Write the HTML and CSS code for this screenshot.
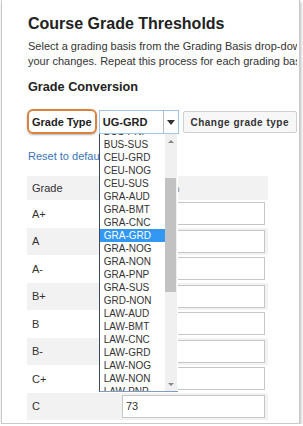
FILE: index.html
```html
<!DOCTYPE html>
<html lang="en">
<head>
<meta charset="utf-8">
<title>Course Grade Thresholds</title>
<link rel="stylesheet" href="styles.css">
</head>
<body>
<div class="card">
  <h1 class="title">Course Grade Thresholds</h1>
  <p class="intro">Select a grading basis from the Grading Basis drop-down list, make<br>your changes. Repeat this process for each grading basis.</p>
  <h2 class="subtitle">Grade Conversion</h2>
  <div class="controls">
    <span class="type-label">Grade Type</span>
    <div class="select">
      <span class="select-value">UG-GRD</span>
      <span class="select-btn"><span class="caret"></span></span>
      <div class="listbox">
        <div class="options">
          <div class="opt">BUS-PNP</div>
          <div class="opt">BUS-SUS</div>
          <div class="opt">CEU-GRD</div>
          <div class="opt">CEU-NOG</div>
          <div class="opt">CEU-SUS</div>
          <div class="opt">GRA-AUD</div>
          <div class="opt">GRA-BMT</div>
          <div class="opt">GRA-CNC</div>
          <div class="opt opt-sel">GRA-GRD</div>
          <div class="opt">GRA-NOG</div>
          <div class="opt">GRA-NON</div>
          <div class="opt">GRA-PNP</div>
          <div class="opt">GRA-SUS</div>
          <div class="opt">GRD-NON</div>
          <div class="opt">LAW-AUD</div>
          <div class="opt">LAW-BMT</div>
          <div class="opt">LAW-CNC</div>
          <div class="opt">LAW-GRD</div>
          <div class="opt">LAW-NOG</div>
          <div class="opt">LAW-NON</div>
          <div class="opt">LAW-PNP</div>
          <div class="opt">LAW-SUS</div>
        </div>
        <div class="scrollbar">
          <div class="sb-arrow"><span class="tri-up"></span></div>
          <div class="sb-track"><div class="sb-thumb"></div></div>
          <div class="sb-arrow"><span class="tri-down"></span></div>
        </div>
      </div>
    </div>
    <button class="change-btn" type="button">Change grade type</button>
  </div>
  <a class="reset" href="#">Reset to default values</a>
  <div class="grades">
    <div class="row row-alt row-head"><div class="c1">Grade</div><div class="c2">Minimum %</div></div>
    <div class="row"><div class="c1">A+</div><div class="c2"><input class="inp" value="97"></div></div>
    <div class="row row-alt"><div class="c1">A</div><div class="c2"><input class="inp" value="93"></div></div>
    <div class="row"><div class="c1">A-</div><div class="c2"><input class="inp" value="90"></div></div>
    <div class="row row-alt"><div class="c1">B+</div><div class="c2"><input class="inp" value="87"></div></div>
    <div class="row"><div class="c1">B</div><div class="c2"><input class="inp" value="83"></div></div>
    <div class="row row-alt"><div class="c1">B-</div><div class="c2"><input class="inp" value="80"></div></div>
    <div class="row"><div class="c1">C+</div><div class="c2"><input class="inp" value="77"></div></div>
    <div class="row row-alt"><div class="c1">C</div><div class="c2"><input class="inp" value="73"></div></div>
  </div>
</div>
</body>
</html>
```
FILE: styles.css
```css
* { box-sizing: border-box; }
html, body { margin: 0; padding: 0; background: #fff; }
body { font-family: "Liberation Sans", Arial, sans-serif; color: #333; }

.card {
  margin-left: 1px;
  width: 299px;
  height: 424px;
  border: 1px solid #c9c9c9;
  border-top: none;
  box-shadow: 1px 2px 3px rgba(0,0,0,0.28);
  overflow: hidden;
  padding: 14px 0 0 26px;
  background: #fff;
  white-space: nowrap;
}

.title {
  margin: 0;
  font-size: 16px;
  line-height: 20px;
  font-weight: bold;
  color: #222;
}

.intro {
  margin: 5px 2px 0 0;
  overflow: hidden;
  font-size: 11px;
  line-height: 15px;
  color: #333;
}

.subtitle {
  margin: 10px 0 0;
  font-size: 12.7px;
  line-height: 16px;
  font-weight: bold;
  color: #222;
}

.controls {
  margin: 14px 0 0 -1px;
  display: flex;
  align-items: flex-start;
}

.type-label {
  height: 25px;
  border: 2px solid #d9833f;
  border-radius: 6px;
  box-shadow: 0 1px 2px rgba(0,0,0,0.3);
  padding: 0 3px;
  font-size: 11px;
  font-weight: bold;
  color: #222;
  display: flex;
  align-items: center;
}

.select {
  position: relative;
  margin: 1px 0 0 2px;
  width: 80px;
  height: 24px;
  border: 1px solid #9ec4e6;
  background: #fff;
  display: flex;
  align-items: center;
}

.select-value {
  flex: 1;
  padding-left: 3px;
  font-size: 11px;
  font-weight: bold;
  color: #222;
}

.select-btn {
  width: 15px;
  height: 100%;
  border-left: 1px solid #bbb;
  display: flex;
  align-items: center;
  justify-content: center;
  margin: 0;
}

.caret {
  width: 0;
  height: 0;
  border-left: 4px solid transparent;
  border-right: 4px solid transparent;
  border-top: 5px solid #333;
}

.listbox {
  position: absolute;
  left: -1px;
  top: calc(100% + 1px);
  width: 79px;
  height: 258px;
  border-left: 1px solid #3a4a60;
  border-bottom: 1px solid #7f9cc2;
  background: #fff;
  display: flex;
  overflow: hidden;
  z-index: 2;
}

.options {
  width: 65px;
  margin-top: -9.5px;
}

.opt {
  height: 13px;
  line-height: 13px;
  padding-left: 4px;
  font-size: 10px;
  color: #333;
}

.opt-sel {
  background: #3298f3;
  color: #fff;
}

.scrollbar {
  width: 12px;
  height: 100%;
  background: #f0f0f0;
  display: flex;
  flex-direction: column;
}

.sb-arrow {
  height: 14px;
  display: flex;
  align-items: center;
  justify-content: center;
}

.tri-up, .tri-down {
  width: 0;
  height: 0;
  border-left: 3px solid transparent;
  border-right: 3px solid transparent;
}
.tri-up { border-bottom: 3px solid #888; }
.tri-down { border-top: 3px solid #888; }

.sb-track {
  flex: 1;
  padding: 30px 1px 0 0;
}

.sb-thumb {
  height: 114px;
  background: #c2c2c2;
}

.change-btn {
  margin: 2px 0 0 4px;
  width: 114px;
  height: 22px;
  border: 1px solid #cfcfcf;
  border-radius: 2px;
  background: #f7f7f7;
  font-family: "Liberation Sans", Arial, sans-serif;
  font-size: 10px;
  font-weight: bold;
  letter-spacing: 0.5px;
  color: #333;
  padding: 0;
}

.reset {
  display: block;
  margin-top: 15px;
  font-size: 11px;
  line-height: 15px;
  color: #3b73b9;
  text-decoration: none;
}

.grades {
  margin: 12px 0 0 -1px;
  width: 241px;
}

.row {
  display: grid;
  grid-template-columns: 91px 1fr;
  height: 27.5px;
  align-items: center;
  font-size: 11px;
  color: #333;
}

.row-head { height: 24px; }
.row-alt { background: #f2f2f2; }

.c1 { padding-left: 5px; }
.c2 { padding: 0 3px 0 4px; color: #777; }

.inp {
  display: block;
  width: 100%;
  height: 23px;
  border: 1px solid #c6c6c6;
  background: #fff;
  padding: 0 3px;
  font-family: "Liberation Sans", Arial, sans-serif;
  font-size: 11px;
  color: #333;
  outline: none;
}
```
